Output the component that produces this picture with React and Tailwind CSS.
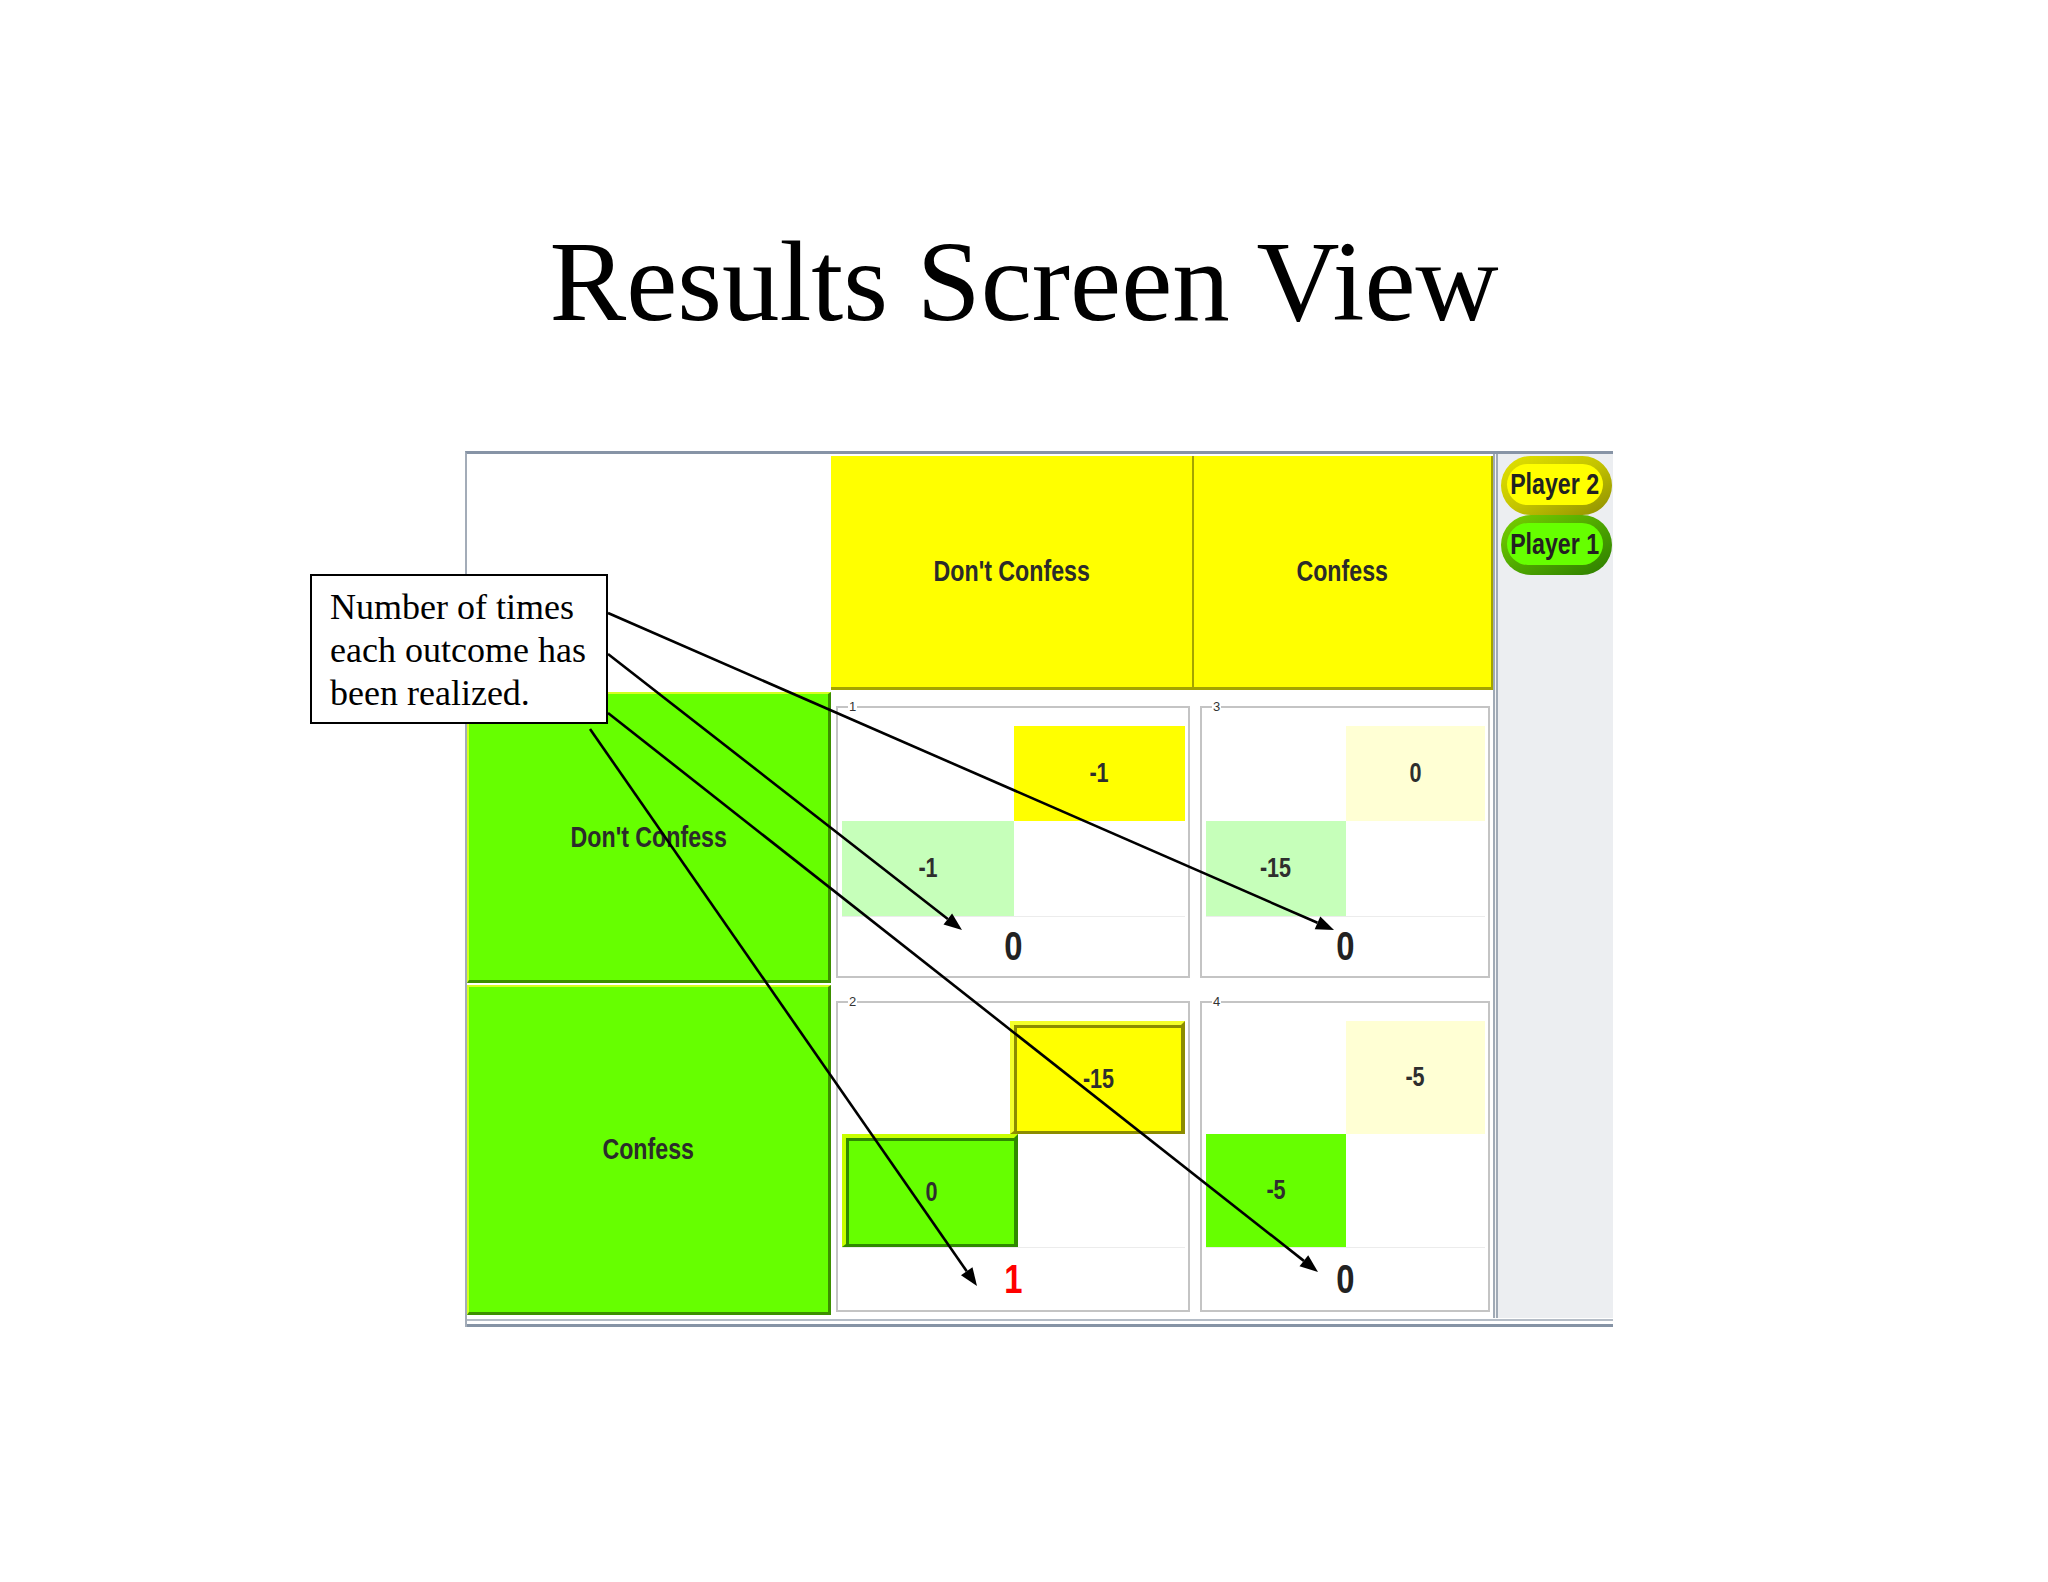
import React from "react";

const NB = "font-['Liberation_Sans',Arial,sans-serif] font-bold";

function Narrow({ children, className = "" }) {
  return <span className={`inline-block scale-x-[0.8] whitespace-nowrap ${NB} ${className}`}>{children}</span>;
}

function PlainBox({ bg, value }) {
  return (
    <div className={`flex-1 flex items-center justify-center ${bg}`}>
      <Narrow className="text-[27px] leading-none text-[#2e2e2e]">{value}</Narrow>
    </div>
  );
}

function RaisedYellow({ value }) {
  return (
    <div className="flex-1 flex border-t-4 border-l-4 border-r-4 border-b-[3px] border-t-[#f4ff2a] border-l-[#f4ff2a] border-r-[#8c8c00] border-b-[#8c8c00]">
      <div className="flex-1 flex items-center justify-center bg-[#ffff00] border-t-[3px] border-l-[3px] border-t-[#8c8c00] border-l-[#8c8c00]">
        <Narrow className="text-[27px] leading-none text-[#2e2e2e]">{value}</Narrow>
      </div>
    </div>
  );
}

function RaisedGreen({ value }) {
  return (
    <div className="flex-1 flex border-t-4 border-l-4 border-r-4 border-b-[3px] border-t-[#c8ff00] border-l-[#c8ff00] border-r-[#2f8a00] border-b-[#2f8a00]">
      <div className="flex-1 flex items-center justify-center bg-[#66ff00] border-t-[3px] border-l-[3px] border-t-[#2f8a00] border-l-[#2f8a00]">
        <Narrow className="text-[27px] leading-none text-[#2e2e2e]">{value}</Narrow>
      </div>
    </div>
  );
}

function Cell({ label, boxH, topBox, bottomBox, count, red, outer }) {
  return (
    <div className={outer}>
      <div className="relative h-full border-2 border-[#c4c4c4] pt-[18px] pl-[4px] pr-[3px] flex flex-col bg-white">
        <span className="absolute -top-[9px] left-[10px] bg-white px-[1px] text-[13px] leading-[15px] text-[#333] font-['Liberation_Sans',Arial,sans-serif]">
          {label}
        </span>
        <div className={`flex ${boxH}`}>
          <div className="flex-1" />
          {topBox}
        </div>
        <div className={`flex ${boxH}`}>
          {bottomBox}
          <div className="flex-1" />
        </div>
        <div className="flex-1 border-t border-[#ececec] flex items-center justify-center">
          <Narrow className={`text-[41px] leading-none ${red ? "text-[#ff0000]" : "text-[#222]"}`}>{count}</Narrow>
        </div>
      </div>
    </div>
  );
}

function Pill({ label, outer, inner, h }) {
  return (
    <div className={`${h} rounded-full ${outer} pt-[8px] pb-[10px] pl-[6px] pr-[9px]`}>
      <div className={`h-full rounded-full ${inner} flex items-center justify-center`}>
        <Narrow className="text-[29px] leading-none text-[#222]">{label}</Narrow>
      </div>
    </div>
  );
}

function arrowHead(x1, y1, x2, y2, len = 18, half = 7) {
  const dx = x2 - x1;
  const dy = y2 - y1;
  const l = Math.hypot(dx, dy);
  const ux = dx / l;
  const uy = dy / l;
  const bx = x2 - ux * len;
  const by = y2 - uy * len;
  const px = -uy * half;
  const py = ux * half;
  return { bx, by, pts: `${x2},${y2} ${bx + px},${by + py} ${bx - px},${by - py}` };
}

const ARROWS = [
  [608, 613, 1334, 930],
  [608, 654, 962, 930],
  [608, 713, 1318, 1272],
  [590, 729, 977, 1286],
];

export default function App() {
  return (
    <div className="relative w-[2048px] h-[1582px] bg-white overflow-hidden">
      <h1 className="pt-[224px] text-center text-[115px] leading-[115px] font-['Liberation_Serif','Times_New_Roman',serif] text-black">
        Results Screen View
      </h1>

      <div className="ml-[465px] mt-[112px] w-[1148px] border-t-[3px] border-t-[#8794a6] border-l-2 border-l-[#a3acb8]">
        <div className="flex">
          <div className="grid grid-cols-[364px_363px_299px] grid-rows-[236px_294px_334px] bg-white">
            {/* header row */}
            <div className="bg-white" />
            <div className="pt-[2px]">
              <div className="h-full bg-[#ffff00] border-r-2 border-b-[3px] border-[#a4a400] flex items-center justify-center">
                <Narrow className="text-[29px] leading-none text-[#2b2b2b]">Don't Confess</Narrow>
              </div>
            </div>
            <div className="pt-[2px]">
              <div className="h-full bg-[#ffff00] border-r-2 border-b-[3px] border-[#a4a400] flex items-center justify-center">
                <Narrow className="text-[29px] leading-none text-[#2b2b2b]">Confess</Narrow>
              </div>
            </div>

            {/* row 1 */}
            <div className="pt-[2px] pb-[1px]">
              <div className="h-full bg-[#66ff00] border-t-2 border-l-2 border-r-[3px] border-b-[3px] border-t-[#d4ff20] border-l-[#d4ff20] border-r-[#3c8f00] border-b-[#3c8f00] flex items-center justify-center">
                <Narrow className="text-[29px] leading-none text-[#2b2b2b]">Don't Confess</Narrow>
              </div>
            </div>
            <Cell
              outer="pt-[16px] pl-[5px] pr-[4px] pb-[6px]"
              label="1"
              boxH="h-[95px]"
              topBox={<PlainBox bg="bg-[#ffff00]" value="-1" />}
              bottomBox={<PlainBox bg="bg-[#c6ffba]" value="-1" />}
              count="0"
            />
            <Cell
              outer="pt-[16px] pl-[6px] pr-[3px] pb-[6px]"
              label="3"
              boxH="h-[95px]"
              topBox={<PlainBox bg="bg-[#ffffd4]" value="0" />}
              bottomBox={<PlainBox bg="bg-[#c6ffba]" value="-15" />}
              count="0"
            />

            {/* row 2 */}
            <div className="pt-[1px] pb-[3px]">
              <div className="h-full bg-[#66ff00] border-t-2 border-l-2 border-r-[3px] border-b-[3px] border-t-[#d4ff20] border-l-[#d4ff20] border-r-[#3c8f00] border-b-[#3c8f00] flex items-center justify-center">
                <Narrow className="text-[29px] leading-none text-[#2b2b2b]">Confess</Narrow>
              </div>
            </div>
            <Cell
              outer="pt-[17px] pl-[5px] pr-[4px] pb-[6px]"
              label="2"
              boxH="h-[113px]"
              topBox={<RaisedYellow value="-15" />}
              bottomBox={<RaisedGreen value="0" />}
              count="1"
              red
            />
            <Cell
              outer="pt-[17px] pl-[6px] pr-[3px] pb-[6px]"
              label="4"
              boxH="h-[113px]"
              topBox={<PlainBox bg="bg-[#ffffd4]" value="-5" />}
              bottomBox={<PlainBox bg="bg-[#66ff00]" value="-5" />}
              count="0"
            />
          </div>

          <div className="w-[5px] border-l-2 border-r-2 border-[#a0aab6] bg-[#f4f5f6]" />

          <div className="w-[115px] bg-[#eceef1] pt-[2px] pl-[3px] pr-[1px] flex flex-col">
            <Pill
              label="Player 2"
              h="h-[59px]"
              outer="bg-linear-to-br from-[#e2e200] via-[#c4c400] to-[#8e8e00]"
              inner="bg-[#ffff00]"
            />
            <Pill
              label="Player 1"
              h="h-[60px]"
              outer="bg-linear-to-br from-[#7ad000] via-[#4fa800] to-[#2c7c00]"
              inner="bg-[#66ff00]"
            />
          </div>
        </div>
        <div className="mt-[1px] h-[8px] border-t-2 border-t-[#b4bcc6] border-b-[3px] border-b-[#8593a5] bg-white" />
      </div>

      {/* callout */}
      <div className="absolute left-[310px] top-[574px] z-10 w-[298px] h-[150px] border-2 border-black bg-white pl-[18px] pt-[10px] font-['Liberation_Serif','Times_New_Roman',serif] text-[36px] leading-[43px] text-black">
        <div>Number of times</div>
        <div>each outcome has</div>
        <div>been realized.</div>
      </div>

      <svg
        className="absolute left-0 top-0 z-20 pointer-events-none"
        width="2048"
        height="1582"
        viewBox="0 0 2048 1582"
      >
        {ARROWS.map(([x1, y1, x2, y2], i) => {
          const a = arrowHead(x1, y1, x2, y2);
          return (
            <g key={i}>
              <line x1={x1} y1={y1} x2={a.bx} y2={a.by} stroke="black" strokeWidth="2.6" />
              <polygon points={a.pts} fill="black" />
            </g>
          );
        })}
      </svg>
    </div>
  );
}
